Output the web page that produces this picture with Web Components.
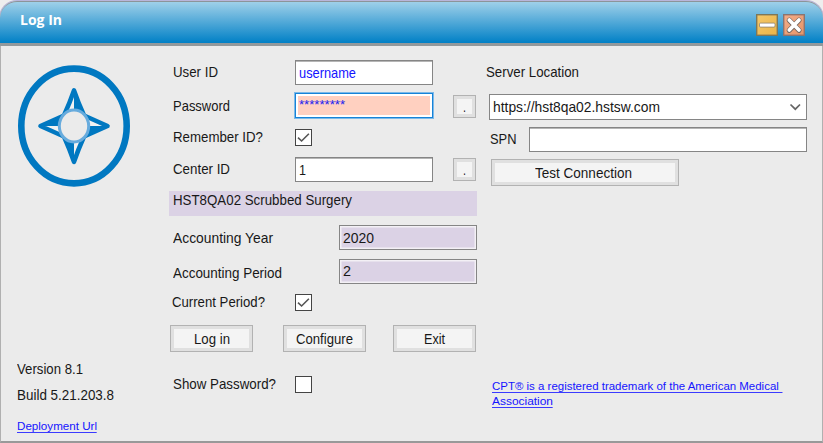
<!DOCTYPE html>
<html lang="en"><head><meta charset="utf-8"><title>Log In</title>
<style>html,body{margin:0;width:823px;height:443px;overflow:hidden;background:#eee;font-family:"Liberation Sans",Arial,sans-serif;color:#181818}</style></head>
<body><login-window></login-window>
<script>
// Single line of text condensed or widened to the width in the "w" attribute.
class FitText extends HTMLElement{
  connectedCallback(){
    const size=this.getAttribute('size')||'15',w=+this.getAttribute('w');
    const r=this.attachShadow({mode:'open'});
    r.innerHTML=`<style>:host{display:block;flex:none;width:${w}px;height:16px;line-height:16px;font-size:${size}px;white-space:pre}
    span{display:inline-block;transform-origin:0 0}:host([link]) span{color:#1414ff;border-bottom:1.4px solid #3a3aff;line-height:12px;height:12px}
    :host([link]){height:15px;line-height:15px}</style><span></span>`;
    const s=r.querySelector('span');s.textContent=this.getAttribute('text');
    s.style.transform=`scaleX(${w/s.getBoundingClientRect().width})`;
  }
}
customElements.define('fit-text',FitText);

const define=(name,html)=>customElements.define(name,class extends HTMLElement{
  connectedCallback(){if(!this.shadowRoot)this.attachShadow({mode:'open'}).innerHTML=html}
});
define('text-field',`<style>:host{display:flex;box-sizing:border-box;flex:none;width:138px;height:25px;border:1px solid #858585;box-shadow:inset 0 1px #b5b5b5;background:#fff;padding:4px 0 0 3px}
:host([readonly]){background:#dbd2e5;box-shadow:inset 0 0 0 1.5px #f3f0f5}
:host([focused]){background:#ffd0c0;border-color:#1683d8;box-shadow:inset 0 0 0 2px #fff;color:#2222f0;outline:.5px solid #7db9e8}
:host([blue]){color:#1414ff}:host([combo]){justify-content:space-between;height:26px;box-shadow:none}</style><slot></slot>`);
define('push-button',`<style>:host{display:flex;box-sizing:border-box;flex:none;justify-content:center;width:83px;height:27px;border:1px solid #b2b2b2;box-shadow:inset 0 0 0 3px #e0e0e0;background:#f4f4f4;padding-top:5px}
:host([small]){width:23px;height:23px;padding-top:3px}</style><slot></slot>`);
define('check-box',`<style>:host{display:block;box-sizing:border-box;flex:none;width:17px;height:17px;border:1.4px solid #444;background:#fff}svg{display:none}:host([checked]) svg{display:block}</style>
<svg width="15" height="15" viewBox="0 0 15 15"><path d="M2 7.6 5.6 11 12.9 3.7" fill="none" stroke="#555" stroke-width="1.6"/></svg>`);
define('form-row',`<style>:host{display:flex;align-items:flex-start;box-sizing:border-box;flex:none}</style><slot></slot>`);
define('compass-logo',`<style>:host{display:block;width:114px;height:124px}</style>
<svg width="114" height="124" viewBox="0 0 114 124"><ellipse cx="57" cy="61" rx="52.7" ry="57.4" fill="none" stroke="#0078c1" stroke-width="6.6"/>
<path d="M57 25.4Q61 37 67 50.5L90.5 61 67 71.5Q61 85 57 96.8 53 85 47 71.5L23.5 61 47 50.5Q53 37 57 25.4Z" fill="#f2f2f2" stroke="#0078c1" stroke-width="4.6" stroke-linejoin="round"/>
<path d="M57 25 67.5 50.5 57 61ZM90.5 61 67.5 71.5 57 61ZM57 97 46.5 71.5 57 61ZM23.5 61 46.5 50.5 57 61Z" fill="#0078c1"/>
<ellipse cx="57" cy="61" rx="14.7" ry="16" fill="#ebebeb" stroke="#67abdd" stroke-width="3"/></svg>`);
define('title-bar',`<style>:host{display:flex;justify-content:space-between;align-items:flex-start;box-sizing:border-box;height:45px;padding:12px 18px 0 20px;border-top:1.5px solid #8c9499;border-bottom:3px solid #92999c;border-radius:17px 17px 0 0;background:linear-gradient(#9fd0e9,#0080c6);color:#fff;font-family:"Open Sans",sans-serif;font-weight:bold}
fit-text{margin-top:-2px}div{display:flex;gap:5px}</style><fit-text text="Log In" w="42" size="14.3"></fit-text>
<div><svg width="22" height="22" viewBox="0 0 22 22"><defs><linearGradient id="g" x2="1" y2="1"><stop stop-color="#f5c869"/><stop offset="1" stop-color="#eab448"/></linearGradient></defs><rect x=".7" y=".7" width="20.6" height="20.6" fill="url(#g)" stroke="#7d7758" stroke-width="1.4"/><rect x="3.5" y="9.1" width="15.5" height="4" rx="1" fill="#fff" stroke="#8c806c" stroke-width=".8"/></svg>
<svg width="22" height="22" viewBox="0 0 22 22"><defs><linearGradient id="r" x2="1" y2="1"><stop stop-color="#f5ad88"/><stop offset="1" stop-color="#e59468"/></linearGradient></defs><rect x=".7" y=".7" width="20.6" height="20.6" fill="url(#r)" stroke="#8b7470" stroke-width="1.4"/><path d="m6.3 6.3 9.7 10M16 6.3l-9.7 10" stroke="#73665f" stroke-width="5.2" stroke-linecap="round"/><path d="m6.3 6 9.7 10M16 6 6.3 16" stroke="#fff" stroke-width="3.7" stroke-linecap="round"/></svg></div>`);
define('login-window',`<style>
:host{display:block;width:823px;height:443px;overflow:hidden}
.win{display:flex;flex-direction:column;box-sizing:border-box;height:442px;margin-top:1px;border-radius:17px 17px 0 0;background:#ebebeb;box-shadow:0 0 0 1px #b9b5da}
main{display:grid;grid-template-columns:169px 316px 1fr;flex:1;box-sizing:border-box;border:1px solid #b0b0b0;border-width:0 1px 2px 1px;border-bottom-color:#999;min-height:0}
section{display:flex;flex-direction:column;align-items:flex-start;padding-top:14px}
.side{padding:19px 0 0 16px}
.band{box-sizing:border-box;width:308px;height:25px;background:#dbd2e5;padding:1px 0 0 4px}
.field{width:122px;padding-left:3px;flex:none}
</style><div class="win"><title-bar></title-bar><main>
<section class="side"><compass-logo></compass-logo>
<fit-text text="Version 8.1" w="66" style="margin-top:172px"></fit-text>
<fit-text text="Build 5.21.203.8" w="97" style="margin-top:10px"></fit-text>
<fit-text link text="Deployment Url" w="80" size="11.8" style="margin-top:16px"></fit-text></section>
<section>
<form-row style="height:33px"><div class="field"><fit-text text="User ID" w="45" style="margin-top:4px"></fit-text></div><text-field blue><fit-text text="username" w="57"></fit-text></text-field></form-row>
<form-row style="height:36px"><div class="field"><fit-text text="Password" w="57" style="margin-top:5px"></fit-text></div><text-field focused><fit-text text="*********" w="46" size="13" style="margin-top:-1px"></fit-text></text-field><push-button small style="margin:2px 0 0 20px"><fit-text text="." w="3"></fit-text></push-button></form-row>
<form-row style="height:28px"><div class="field"><fit-text text="Remember ID?" w="90"></fit-text></div><check-box checked></check-box></form-row>
<form-row style="height:34px"><div class="field"><fit-text text="Center ID" w="57" style="margin:4px 0 0 -.5px"></fit-text></div><text-field><fit-text text="1" w="7"></fit-text></text-field><push-button small style="margin:1px 0 0 20px"><fit-text text="." w="3"></fit-text></push-button></form-row>
<div class="band" style="margin-left:-1px"><fit-text text="HST8QA02 Scrubbed Surgery" w="179"></fit-text></div>
<form-row style="height:34px;margin-top:9px;padding-left:3px"><fit-text text="Accounting Year" w="100" style="margin:5px 66px 0 0"></fit-text><text-field readonly><fit-text text="2020" w="31"></fit-text></text-field></form-row>
<form-row style="height:35px;padding-left:3px"><fit-text text="Accounting Period" w="109" style="margin:6px 57px 0 0"></fit-text><text-field readonly style="padding-top:3px"><fit-text text="2" w="8"></fit-text></text-field></form-row>
<form-row style="height:31px"><div class="field"><fit-text text="Current Period?" w="93" style="margin:0 0 0 -1px"></fit-text></div><check-box checked></check-box></form-row>
<form-row style="height:51px"><push-button><fit-text text="Log in" w="36"></fit-text></push-button><push-button style="margin:0 27px 0 30px"><fit-text text="Configure" w="57"></fit-text></push-button><push-button><fit-text text="Exit" w="21"></fit-text></push-button></form-row>
<form-row><div class="field"><fit-text text="Show Password?" w="103"></fit-text></div><check-box></check-box></form-row>
</section>
<section>
<fit-text text="Server Location" w="93" style="margin-top:4px"></fit-text>
<text-field combo style="width:318px;margin:14px 0 0 3px;padding-left:2.5px"><fit-text text="https://hst8qa02.hstsw.com" w="167"></fit-text><svg width="20" height="16" viewBox="0 0 20 16"><path d="m4.5 5.5 4.8 4.7L14 5.5" fill="none" stroke="#666" stroke-width="1.7"/></svg></text-field>
<form-row style="margin:7px 0 7px 4px"><fit-text text="SPN" w="26.5" style="margin:4px 12.5px 0 0"></fit-text><text-field style="width:278px"></text-field></form-row>
<push-button style="width:188px;margin-left:5px;padding-right:4px"><fit-text text="Test Connection" w="97"></fit-text></push-button>
<fit-text link text="CPT® is a registered trademark of the American Medical " w="290" size="11.8" style="margin:193px 0 0 6px"></fit-text>
<fit-text link text="Association" w="61" size="11.8" style="margin-left:6px"></fit-text>
</section></main></div>`);
</script></body></html>
